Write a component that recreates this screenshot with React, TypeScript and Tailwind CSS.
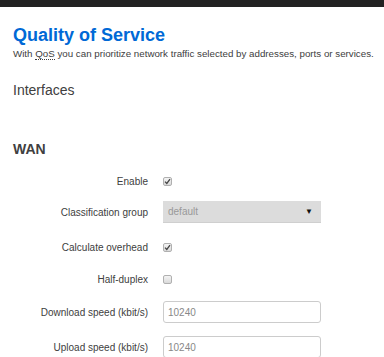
import React from 'react';

const CheckBox: React.FC<{ checked?: boolean }> = ({ checked }) => (
  <span className="w-[9px] h-[9px] rounded-[2px] border border-[#b0b0b0] bg-gradient-to-b from-[#f4f4f4] to-[#dadada] flex items-center justify-center">
    {checked && (
      <svg width="7" height="7" viewBox="0 0 7 7">
        <path d="M1 3.6 L2.8 5.4 L6 1.2" stroke="#444" strokeWidth="1.3" fill="none" />
      </svg>
    )}
  </span>
);

const Row: React.FC<{ label: string; className: string; children: React.ReactNode }> = ({ label, className, children }) => (
  <div className={`flex items-center h-[22px] ${className}`}>
    <div className="w-[148px] text-right text-[10px] text-[#404040]">{label}</div>
    <div className="ml-[15px] flex items-center">{children}</div>
  </div>
);

const App: React.FC = () => {
  return (
    <div className="min-h-screen bg-white font-['Liberation_Sans',Arial,sans-serif]">
      <div className="h-[7px] bg-[#222]"></div>

      <div className="px-[13px]">
        <h2 className="mt-[17px] text-[18px] leading-[22px] font-bold text-[#0069d6]">Quality of Service</h2>
        <p className="mt-[1px] text-[9.75px] leading-[14px] text-[#404040] whitespace-nowrap">
          With <abbr className="no-underline border-b border-dotted border-[#404040]">QoS</abbr> you can prioritize network traffic selected by addresses, ports or services.
        </p>

        <h3 className="mt-[20px] text-[14px] leading-[18px] text-[#404040]">Interfaces</h3>

        <h4 className="mt-[41px] text-[14px] leading-[18px] font-bold text-[#404040]">WAN</h4>
      </div>

      <div className="mt-[12px] flex flex-col">
        <Row label="Enable" className="">
          <CheckBox checked />
        </Row>
        <Row label="Classification group" className="mt-[9px]">
          <div className="w-[158px] h-[22px] bg-[#dcdcdc] flex items-center justify-between pl-[5px] pr-[8px] border-b border-[#cfcfcf]">
            <span className="text-[10px] text-[#999]">default</span>
            <span className="text-[8px] text-[#111]">▼</span>
          </div>
        </Row>
        <Row label="Calculate overhead" className="mt-[13px]">
          <CheckBox checked />
        </Row>
        <Row label="Half-duplex" className="mt-[10px]">
          <CheckBox />
        </Row>
        <Row label="Download speed (kbit/s)" className="mt-[11px]">
          <div className="w-[158px] h-[22px] border border-[#ccc] rounded-[3px] flex items-center px-[4px] text-[10px] text-[#888]">10240</div>
        </Row>
        <Row label="Upload speed (kbit/s)" className="mt-[13px]">
          <div className="w-[158px] h-[22px] border border-[#ccc] rounded-[3px] flex items-center px-[4px] text-[10px] text-[#888]">10240</div>
        </Row>
      </div>
    </div>
  );
};

export default App;
